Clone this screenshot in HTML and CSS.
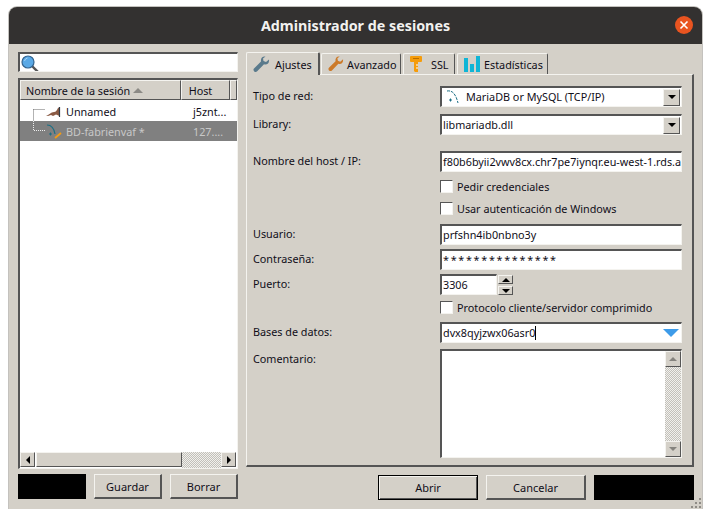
FILE: index.html
```html
<!DOCTYPE html>
<html lang="es">
<head>
    <meta charset="UTF-8">
    <title>Administrador de sesiones</title>
    <link rel="stylesheet" href="styles.css">
</head>
<body>
<div class="window">
    <header class="titlebar">
        <span class="title">Administrador de sesiones</span>
        <span class="close">
            <svg width="10" height="10" viewBox="0 0 10 10"><path d="M1.5 1.5l7 7M8.5 1.5l-7 7" stroke="#fff" stroke-width="1.6"/></svg>
        </span>
    </header>

    <div class="content">
        <div class="left">
            <div class="search sunken">
                <svg width="20" height="20" viewBox="0 0 20 20"><path d="M12 12l6 6" stroke="#555" stroke-width="2.4"/><circle cx="8" cy="8" r="6" fill="#5aa9e6" stroke="#33648f" stroke-width="1.2"/><path d="M4.5 7a4 4 0 0 1 3-3" stroke="#a8d4f5" fill="none"/></svg>
            </div>

            <div class="list sunken">
                <div class="list-head">
                    <div class="col col-name">Nombre de la sesión<span class="sort"></span></div>
                    <div class="col col-host">Host</div>
                    <div class="col col-rest"></div>
                </div>
                <div class="list-body">
                    <div class="row">
                        <svg class="tree" width="13" height="20" viewBox="0 0 13 20"><path d="M0.5 7.500h12M0.5 7.500v12" stroke="#666" stroke-dasharray="1 1" fill="none"/></svg>
                        <svg class="row-icon" width="16" height="16" viewBox="0 0 16 16"><path d="M0 12C3 11 5 8 8 8C10 8 11 6 12 4L14 3L13.500 6V12L10 10.500L7 12L5 11L2 12z" fill="#8a5a44"/><path d="M13.500 3v10" stroke="#2f3a44" stroke-width="1.200"/></svg>
                        <span class="row-name">Unnamed</span>
                        <span class="row-host">j5znt...</span>
                    </div>
                    <div class="row row-selected">
                        <svg class="tree" width="13" height="20" viewBox="0 0 13 20"><path d="M0.5 0v9.500h12" stroke="#eee" stroke-dasharray="1 1" fill="none"/></svg>
                        <svg class="row-icon" width="16" height="18" viewBox="0 0 16 18"><path d="M1 3c5 0 7 3 8 9" stroke="#1b6f85" fill="none" stroke-width="1.2"/><path d="M3 12h3M4.500 10.500v3" stroke="#1b6f85"/><path d="M9 16l6-5" stroke="#f39c12" stroke-width="1.8"/></svg>
                        <span class="row-name">BD-fabrienvaf *</span>
                        <span class="row-host">127....</span>
                    </div>
                </div>
                <div class="hscroll">
                    <span class="sb-btn"><i class="arrow arrow-left"></i></span>
                    <span class="sb-thumb"></span>
                    <span class="sb-track"></span>
                    <span class="sb-btn"><i class="arrow arrow-right"></i></span>
                </div>
            </div>

            <div class="actions">
                <span class="blackout"></span>
                <button class="btn btn-small">Guardar</button>
                <button class="btn btn-small">Borrar</button>
            </div>
        </div>

        <div class="right">
            <div class="tabs">
                <div class="tab tab-active tab-ajustes">
                    <svg width="17" height="17" viewBox="0 0 17 17"><path d="M16 3.500l-3 2.500-2.500-1-.5-2.500L12.500 0.500C9.500 0 7.500 2 8 5.500L1 12.500c-1 1 -.5 2.500.5 3.200 1 .6 2 .3 2.700-.4l6.800-7c3 1 5.500-1.300 5-4.800z" fill="#5a7a8c"/></svg>
                    Ajustes
                </div>
                <div class="tab tab-avanzado">
                    <svg width="16" height="16" viewBox="0 0 17 17"><path d="M16 3.500l-3 2.500-2.500-1-.5-2.500L12.500 0.500C9.500 0 7.500 2 8 5.500L1 12.500c-1 1 -.5 2.500.5 3.200 1 .6 2 .3 2.700-.4l6.800-7c3 1 5.500-1.300 5-4.800z" fill="#cc7a29"/></svg>
                    Avanzado
                </div>
                <div class="tab tab-ssl">
                    <svg width="12" height="16" viewBox="0 0 12 16"><path d="M1 0h10a1 1 0 0 1 1 1v4a1 1 0 0 1-1 1H8v10H5l-1-1V6H1a1 1 0 0 1-1-1V1a1 1 0 0 1 1-1z" fill="#f59c0b"/><path d="M3 2.500h6" stroke="#b86e00"/><path d="M6 9h2M6 12h2" stroke="#fff"/></svg>
                    SSL
                </div>
                <div class="tab tab-stats">
                    <svg width="16" height="16" viewBox="0 0 16 16"><path d="M0 2h4v14H0zM6 8h4v8H6zM12 0h4v16h-4z" fill="#0fb5d6"/></svg>
                    Estadísticas
                </div>
            </div>

            <div class="panel">
                <div class="form">
                    <label class="lbl">Tipo de red:</label>
                    <div class="field sunken select">
                        <svg class="db-icon" width="16" height="16" viewBox="0 0 16 16"><path d="M1 2c6-1 9 4 11 12" stroke="#1b6f85" fill="none" stroke-dasharray="3 1"/><path d="M3 11h3M4.500 9.500v3" stroke="#1b6f85"/></svg>
                        <span class="val">MariaDB or MySQL (TCP/IP)</span>
                        <span class="drop"><i class="arrow arrow-down"></i></span>
                    </div>

                    <label class="lbl">Library:</label>
                    <div class="field sunken select">
                        <span class="val">libmariadb.dll</span>
                        <span class="drop"><i class="arrow arrow-down"></i></span>
                    </div>

                    <label class="lbl">Nombre del host / IP:</label>
                    <div class="field sunken"><span class="val">f80b6byii2vwv8cx.chr7pe7iynqr.eu-west-1.rds.a</span></div>

                    <span></span>
                    <div class="check"><i class="box"></i>Pedir credenciales</div>

                    <span></span>
                    <div class="check"><i class="box"></i>Usar autenticación de Windows</div>

                    <label class="lbl">Usuario:</label>
                    <div class="field sunken"><span class="val">prfshn4ib0nbno3y</span></div>

                    <label class="lbl">Contraseña:</label>
                    <div class="field sunken"><span class="val val-pass">***************</span></div>

                    <label class="lbl">Puerto:</label>
                    <div class="port">
                        <div class="field sunken port-input"><span class="val">3306</span></div>
                        <div class="spin">
                            <span class="spin-btn"><i class="arrow arrow-up"></i></span>
                            <span class="spin-btn"><i class="arrow arrow-down"></i></span>
                        </div>
                    </div>

                    <span></span>
                    <div class="check"><i class="box"></i>Protocolo cliente/servidor comprimido</div>

                    <label class="lbl">Bases de datos:</label>
                    <div class="field sunken select">
                        <span class="val">dvx8qyjzwx06asr0<i class="caret"></i></span>
                        <i class="blue-drop"></i>
                    </div>

                    <label class="lbl">Comentario:</label>
                    <div class="memo sunken">
                        <div class="vscroll">
                            <span class="sb-btn sb-btn-v"><i class="arrow arrow-up arrow-off"></i></span>
                            <span class="sb-track"></span>
                            <span class="sb-btn sb-btn-v"><i class="arrow arrow-down arrow-off"></i></span>
                        </div>
                    </div>
                </div>
            </div>

            <div class="actions actions-right">
                <button class="btn btn-wide btn-default">Abrir</button>
                <button class="btn btn-wide">Cancelar</button>
                <span class="blackout blackout-wide"></span>
            </div>
        </div>
    </div>
    <svg class="grip" width="12" height="12" viewBox="0 0 12 12"><path d="M9 1h2v2H9zM9 5h2v2H9zM5 5h2v2H5zM9 9h2v2H9zM5 9h2v2H5zM1 9h2v2H1z" fill="#8f8c86"/></svg>
</div>
</body>
</html>
```

FILE: styles.css
```css
* {
    box-sizing: border-box;
}

body {
    margin: 0;
    background-color: #fff;
    font-family: "Noto Sans", sans-serif;
    font-size: 10.800px;
    color: #100e18;
}

.window {
    position: relative;
    width: 693px;
    height: 502px;
    margin: 7px 0 0 9px;
    background-color: #d4d0c8;
    border-radius: 8px 8px 0 0;
    box-shadow: 0 0 0 1px #c4c2be;
}

.titlebar {
    height: 37px;
    background-color: #333130;
    border-radius: 8px 8px 0 0;
    display: flex;
    align-items: center;
    justify-content: center;
    position: relative;
}

.title {
    color: #f2f1ef;
    font-weight: bold;
    font-size: 14.300px;
}

.close {
    position: absolute;
    right: 9px;
    top: 9px;
    width: 18px;
    height: 18px;
    border-radius: 50%;
    background-color: #e95420;
    display: flex;
    align-items: center;
    justify-content: center;
}

.content {
    display: flex;
    padding: 8px 8px 0 9px;
}

.sunken {
    background-color: #fff;
    border-style: solid;
    border-width: 2px 1px 1px 2px;
    border-color: #555 #f4f3ef #f4f3ef #555;
}

.left {
    width: 220px;
    margin-right: 8px;
}

.search {
    height: 20px;
    margin-bottom: 6px;
    display: flex;
    align-items: flex-start;
    overflow: hidden;
}

.list {
    height: 391px;
    display: flex;
    flex-direction: column;
}

.list-head {
    display: flex;
    height: 20px;
    flex-shrink: 0;
}

.col {
    display: flex;
    align-items: center;
    padding-left: 5px;
    border: 1px solid;
    border-color: #f4f3ef #555 #555 #f4f3ef;
    background-color: #d4d0c8;
}

.col-name {
    width: 163px;
}

.col-host {
    width: 50px;
    padding-left: 7px;
}

.col-rest {
    flex: 1;
}

.sort {
    margin-left: 3px;
    border-left: 5px solid transparent;
    border-right: 5px solid transparent;
    border-bottom: 5px solid #8c8a85;
}

.list-body {
    flex: 1;
    padding-top: 3px;
}

.row {
    display: flex;
    align-items: center;
    height: 20px;
    padding-left: 13px;
}

.row:first-child {
    height: 18px;
}

.row:first-child span {
    margin-bottom: 2px;
}

.row-selected {
    background-color: #808080;
    color: #c8c8c8;
}

.tree,
.row-icon {
    flex-shrink: 0;
}

.row-name {
    margin-left: 4px;
    width: 127px;
}

.hscroll {
    display: flex;
    height: 16px;
    flex-shrink: 0;
    padding-right: 1px;
}

.sb-btn {
    width: 15px;
    height: 15px;
    flex-shrink: 0;
    display: flex;
    align-items: center;
    justify-content: center;
    background-color: #d4d0c8;
    border: 1px solid;
    border-color: #f4f3ef #555 #555 #f4f3ef;
}

.sb-thumb {
    width: 146px;
    height: 15px;
    margin-left: 1px;
    background-color: #d4d0c8;
    border: 1px solid;
    border-color: #f4f3ef #555 #555 #f4f3ef;
}

.sb-track {
    flex: 1;
    background: repeating-conic-gradient(#c2c0ba 0 25%, #f1f0ec 0 50%) 0 0 / 2px 2px;
}

.arrow {
    display: block;
    width: 0;
    height: 0;
    border: 4px solid transparent;
}

.arrow-left {
    border-left-width: 0;
    border-right: 4px solid #000;
}

.arrow-right {
    border-right-width: 0;
    border-left: 4px solid #000;
}

.arrow-down {
    border-bottom-width: 0;
    border-top: 4px solid #000;
}

.arrow-up {
    border-top-width: 0;
    border-bottom: 4px solid #000;
}

.arrow-off {
    border-top-color: #85837e;
    border-bottom-color: #85837e;
}

.actions {
    display: flex;
    gap: 8px;
    margin-top: 5px;
    height: 25px;
}

.blackout {
    width: 68px;
    background-color: #000;
}

.blackout-wide {
    width: 100px;
}

.btn {
    padding: 0;
    font-family: inherit;
    font-size: 11px;
    color: inherit;
    background-color: #d4d0c8;
    border: 1px solid;
    border-width: 1px 2px 2px 1px;
    border-color: #f4f3ef #555 #555 #f4f3ef;
}

.btn-small {
    width: 68px;
}

.btn-wide {
    width: 100px;
}

.btn-default {
    border: 1px solid #000;
    box-shadow: inset 1px 1px 0 #f4f3ef, inset -1px -1px 0 #555;
}

.right {
    flex: 1;
    display: flex;
    flex-direction: column;
}

.tabs {
    display: flex;
    height: 22px;
    padding-left: 1px;
    gap: 2px;
}

.tab {
    display: flex;
    align-items: center;
    gap: 5px;
    margin-top: 1px;
    padding-left: 6px;
    white-space: nowrap;
    background-color: #d4d0c8;
    border: 1px solid;
    border-color: #f4f3ef #555 #f4f3ef #f4f3ef;
    border-bottom: 0;
    border-radius: 2px 2px 0 0;
}

.tab svg {
    flex-shrink: 0;
}

.tab-active {
    margin-top: 0;
    height: 23px;
    z-index: 1;
    margin-right: -1px;
    border-right-width: 2px;
}

.tab-ajustes {
    width: 74px;
    margin-left: -1px;
}

.tab-avanzado {
    width: 80px;
    gap: 3px;
}

.tab-ssl {
    width: 52px;
    gap: 9px;
}

.tab-stats {
    width: 91px;
    gap: 4px;
}

.panel {
    height: 393px;
    padding: 11px 10px 0 6px;
    border: 1px solid;
    border-width: 1px 2px 2px 1px;
    border-color: #f4f3ef #555 #555 #f4f3ef;
}

.form {
    display: grid;
    grid-template-columns: 187px 242px;
    grid-template-rows: 28px 37px 28px 22px 23px 25px 25px 26px 22px 27px 109px;
    align-items: start;
}

.lbl {
    line-height: 20px;
}

.field {
    height: 21px;
    display: flex;
    align-items: center;
    overflow: hidden;
    padding-left: 1px;
}

.val {
    flex: 1;
    white-space: nowrap;
    margin-bottom: 2px;
}

.val-pass {
    letter-spacing: 1.700px;
}

.db-icon {
    margin: 0 4px 0 3px;
    flex-shrink: 0;
}

.drop {
    width: 17px;
    height: 17px;
    margin-right: 1px;
    display: flex;
    align-items: center;
    justify-content: center;
    background-color: #d4d0c8;
    border: 1px solid;
    border-color: #f4f3ef #555 #555 #f4f3ef;
}

.check {
    display: flex;
    align-items: center;
    gap: 4px;
    line-height: 15px;
}

.box {
    width: 13px;
    height: 13px;
    background-color: #fff;
    border: 1px solid;
    border-color: #555 #f4f3ef #f4f3ef #555;
}

.port {
    display: flex;
    gap: 1px;
}

.port-input {
    width: 57px;
}

.spin {
    width: 15px;
    margin-top: 1px;
    display: flex;
    flex-direction: column;
    gap: 2px;
}

.spin-btn {
    height: 9px;
    display: flex;
    align-items: center;
    justify-content: center;
    background-color: #d4d0c8;
    border: 1px solid;
    border-color: #f4f3ef #555 #555 #f4f3ef;
}

.caret {
    display: inline-block;
    width: 1px;
    height: 14px;
    margin-bottom: -3px;
    background-color: #000;
}

.blue-drop {
    margin-right: 2px;
    border-left: 8px solid transparent;
    border-right: 8px solid transparent;
    border-top: 8px solid #3d9be9;
}

.memo {
    height: 109px;
    display: flex;
    justify-content: flex-end;
}

.vscroll {
    width: 16px;
    display: flex;
    flex-direction: column;
}

.sb-btn-v {
    width: 16px;
    height: 16px;
}

.actions-right {
    margin-top: 8px;
    padding-left: 132px;
}

.grip {
    position: absolute;
    right: 0;
    bottom: 0;
}
```
